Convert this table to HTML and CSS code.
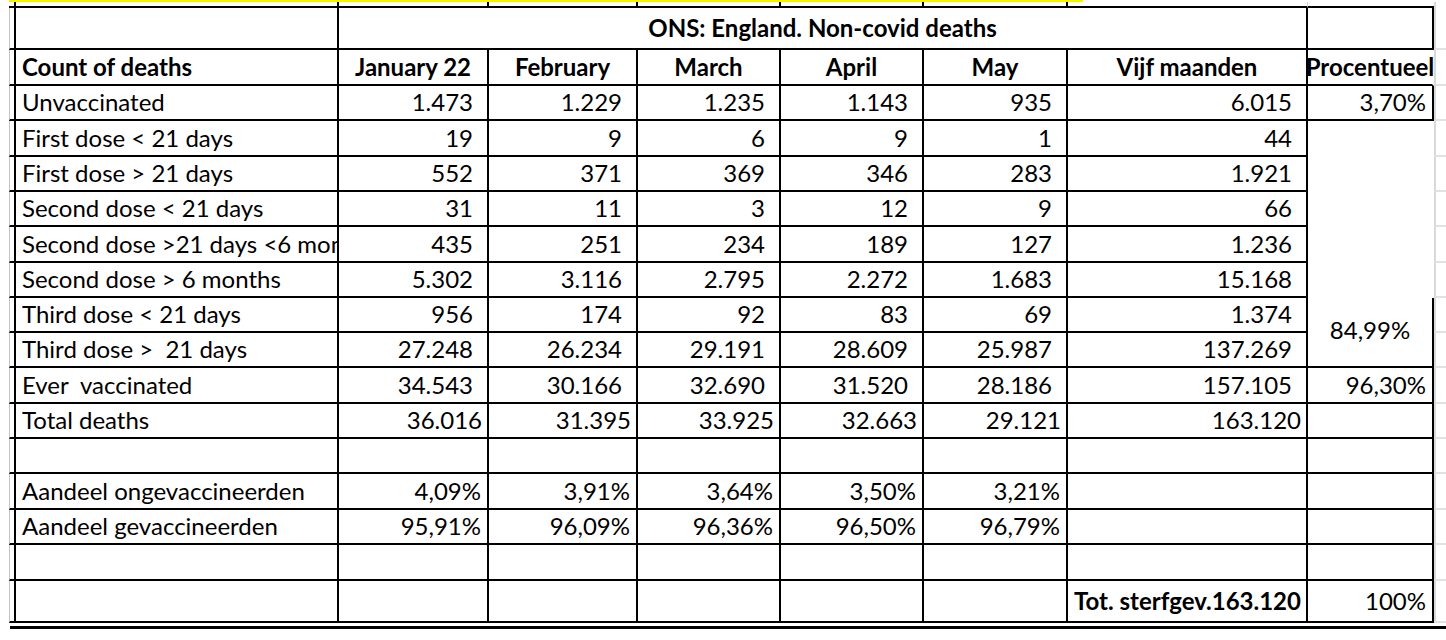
FILE: index.html
```html
<!DOCTYPE html>
<html lang="nl">
<head>
<meta charset="utf-8">
<title>ONS: England. Non-covid deaths</title>
<link rel="stylesheet" href="styles.css">
</head>
<body>
<div class="sheet">
  <div class="yellow"></div>
  <div class="strip">
    <div class="s k"></div><div class="s k"></div><div class="s k"></div><div class="s k"></div><div class="s k"></div><div class="s k"></div><div class="s k"></div><div class="s gr"></div><div class="s"></div><div class="s gx"></div>
  </div>
  <div class="grid">
    <!-- r1 -->
    <div class="c g0"></div><div class="c"></div><div class="c ons">ONS: England. Non-covid deaths</div><div class="c"></div><div class="c gx"></div>
    <!-- r2 -->
    <div class="c g0"></div><div class="c lab b">Count of deaths</div><div class="c hd">January 22</div><div class="c hd">February</div><div class="c hd">March</div><div class="c hd">April</div><div class="c hd">May</div><div class="c hd">Vijf maanden</div><div class="c hd nr">Procentueel</div><div class="c gx"></div>
    <!-- r3 -->
    <div class="c g0"></div><div class="c lab">Unvaccinated</div><div class="c n">1.473</div><div class="c n">1.229</div><div class="c n">1.235</div><div class="c n">1.143</div><div class="c n">935</div><div class="c n">6.015</div><div class="c p">3,70%</div><div class="c gx"></div>
    <!-- r4 -->
    <div class="c g0"></div><div class="c lab">First dose &lt; 21 days</div><div class="c n">19</div><div class="c n">9</div><div class="c n">6</div><div class="c n">9</div><div class="c n">1</div><div class="c n">44</div><div class="c open"></div><div class="c gx"></div>
    <!-- r5 -->
    <div class="c g0"></div><div class="c lab">First dose &gt; 21 days</div><div class="c n">552</div><div class="c n">371</div><div class="c n">369</div><div class="c n">346</div><div class="c n">283</div><div class="c n">1.921</div><div class="c open"></div><div class="c gx"></div>
    <!-- r6 -->
    <div class="c g0"></div><div class="c lab">Second dose &lt; 21 days</div><div class="c n">31</div><div class="c n">11</div><div class="c n">3</div><div class="c n">12</div><div class="c n">9</div><div class="c n">66</div><div class="c open"></div><div class="c gx"></div>
    <!-- r7 -->
    <div class="c g0"></div><div class="c lab">Second dose &gt;21 days &lt;6 months</div><div class="c n">435</div><div class="c n">251</div><div class="c n">234</div><div class="c n">189</div><div class="c n">127</div><div class="c n">1.236</div><div class="c open"></div><div class="c gx"></div>
    <!-- r8 -->
    <div class="c g0"></div><div class="c lab">Second dose &gt; 6 months</div><div class="c n">5.302</div><div class="c n">3.116</div><div class="c n">2.795</div><div class="c n">2.272</div><div class="c n">1.683</div><div class="c n">15.168</div><div class="c open"></div><div class="c gx"></div>
    <!-- r9 -->
    <div class="c g0"></div><div class="c lab">Third dose &lt; 21 days</div><div class="c n">956</div><div class="c n">174</div><div class="c n">92</div><div class="c n">83</div><div class="c n">69</div><div class="c n">1.374</div><div class="c mid">84,99%</div><div class="c gx"></div>
    <!-- r10 -->
    <div class="c g0"></div><div class="c lab">Third dose &gt;  21 days</div><div class="c n">27.248</div><div class="c n">26.234</div><div class="c n">29.191</div><div class="c n">28.609</div><div class="c n">25.987</div><div class="c n">137.269</div><div class="c gx"></div>
    <!-- r11 -->
    <div class="c g0"></div><div class="c lab">Ever  vaccinated</div><div class="c n">34.543</div><div class="c n">30.166</div><div class="c n">32.690</div><div class="c n">31.520</div><div class="c n">28.186</div><div class="c n">157.105</div><div class="c p">96,30%</div><div class="c gx"></div>
    <!-- r12 -->
    <div class="c g0"></div><div class="c lab">Total deaths</div><div class="c t">36.016</div><div class="c t">31.395</div><div class="c t">33.925</div><div class="c t">32.663</div><div class="c t">29.121</div><div class="c t">163.120</div><div class="c"></div><div class="c gx"></div>
    <!-- r13 -->
    <div class="c g0"></div><div class="c"></div><div class="c"></div><div class="c"></div><div class="c"></div><div class="c"></div><div class="c"></div><div class="c"></div><div class="c"></div><div class="c gx"></div>
    <!-- r14 -->
    <div class="c g0"></div><div class="c lab">Aandeel ongevaccineerden</div><div class="c p">4,09%</div><div class="c p">3,91%</div><div class="c p">3,64%</div><div class="c p">3,50%</div><div class="c p">3,21%</div><div class="c"></div><div class="c"></div><div class="c gx"></div>
    <!-- r15 -->
    <div class="c g0"></div><div class="c lab">Aandeel gevaccineerden</div><div class="c p">95,91%</div><div class="c p">96,09%</div><div class="c p">96,36%</div><div class="c p">96,50%</div><div class="c p">96,79%</div><div class="c"></div><div class="c"></div><div class="c gx"></div>
    <!-- r16 -->
    <div class="c g0"></div><div class="c"></div><div class="c"></div><div class="c"></div><div class="c"></div><div class="c"></div><div class="c"></div><div class="c"></div><div class="c"></div><div class="c gx"></div>
    <!-- r17 -->
    <div class="c g0"></div><div class="c"></div><div class="c"></div><div class="c"></div><div class="c"></div><div class="c"></div><div class="c"></div><div class="c lab b tall">Tot. sterfgev.163.120</div><div class="c p tall">100%</div><div class="c gx"></div>
  </div>
  <div class="dbl"></div>
</div>
</body>
</html>
```
FILE: styles.css
```css
* { box-sizing: border-box; }
html, body { margin: 0; padding: 0; background: #fff; }
body {
  width: 1446px;
  height: 640px;
  overflow: hidden;
  font-family: Lato, "Liberation Sans", sans-serif;
  font-size: 24px;
  color: #000;
}
.sheet {
  margin-left: 9px;
}
.yellow {
  width: 1074px;
  height: 2px;
  background: #f6f200;
}
.strip, .grid {
  display: grid;
  grid-template-columns: 7px 323px 150px 149px 143px 143px 144px 240px 126px 1fr;
}
.strip {
  height: 6px;
}
.s {
  border-bottom: 2px solid #000;
}
.s.k { border-right: 2px solid #000; }
.s.gr { border-right: 1px solid #d4d4d4; }
.s.gx { border-bottom: none; border-left: 2px solid #d9d9d9; }
.grid {
  grid-template-rows: 42px 36px 35px 36px 35px 35px 36px 35px 35px 35px 36px 35px 35px 36px 35px 36px 42px;
}
.c {
  display: flex;
  align-items: flex-end;
  border-right: 2px solid #000;
  border-bottom: 2px solid #000;
  padding-bottom: 2px;
  line-height: 1.2;
  white-space: pre;
  overflow: hidden;
  min-width: 0;
}
.g0 { border-left: 1px solid #c4c4c4; }
.gx {
  border-right: none;
  border-left: 2px solid #d9d9d9;
  border-bottom: 2px solid #e2e2e2;
}
.lab { padding-left: 6px; }
.b { font-weight: 700; }
.hd {
  font-weight: 700;
  justify-content: center;
  overflow: visible;
}
.nr { border-right-color: transparent; }
.open { border-right-color: transparent; border-bottom-color: transparent; }
.ons {
  grid-column: span 6;
  justify-content: center;
  font-weight: 700;
  padding-bottom: 5px;
}
.n { justify-content: flex-end; padding-right: 14px; }
.t { justify-content: flex-end; padding-right: 5px; }
.p { justify-content: flex-end; padding-right: 6px; }
.mid {
  grid-row: span 2;
  align-items: center;
  justify-content: center;
  padding-bottom: 4px;
}
.tall { padding-bottom: 5px; }
.dbl {
  margin-top: 3px;
  margin-left: 1px;
  height: 3px;
  background: #000;
}
```
